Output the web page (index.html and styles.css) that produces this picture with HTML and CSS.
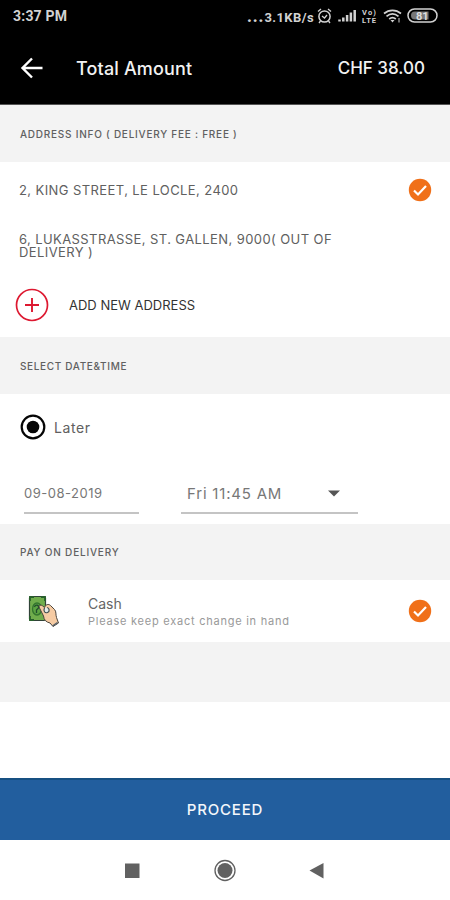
FILE: index.html
```html
<!DOCTYPE html>
<html lang="en">
<head>
<meta charset="utf-8">
<title>Total Amount</title>
<link rel="stylesheet" href="styles.css">
</head>
<body>
<header class="top">
  <div class="status">
    <span class="clock">3:37 PM</span>
    <span class="speed"><b class="dots">...</b>3.1KB/s</span>
    <svg class="status-icons" width="124" height="18" viewBox="0 0 124 18" fill="none" stroke="#d2d2d2">
      <circle cx="8.500" cy="9.500" r="5.600" stroke-width="1.500"/>
      <path d="M2 4.500 5 2M12 2l3 2.500M6 9l2.500 2L11 8M4.500 14 3 16M12.500 14l1.500 2" stroke-width="1.300"/>
      <path d="M23.500 12.500v2M27.300 10.500v4M31.100 8v6.500M34.900 5.500v9M38.700 3v11.500" stroke-width="2.500"/>
      <g fill="#d2d2d2" stroke="none" font-family="Roboto, sans-serif" font-weight="700" font-size="7.500"><text x="46" y="8" textLength="14">Vo)</text><text x="46" y="15.500" textLength="14">LTE</text></g>
      <path d="M68 6.500c5-4.200 12-4.200 17 0M70.500 9.300c3.700-3 8.300-3 12 0M73.200 12c2-1.600 4.600-1.600 6.600 0" stroke-width="1.700"/>
      <path d="m74.500 13 2 2.500 2-2.500z" fill="#d2d2d2" stroke="none"/>
      <path d="M83 11v4.500" stroke-width="1"/>
      <rect x="92" y="2" width="29" height="13" rx="6.500" stroke-width="1.500"/>
      <path d="M99 4.500h13.500v8H99a4 4 0 0 1 0-8z" fill="#777" stroke="none"/>
      <text x="100" y="12.500" fill="#ddd" stroke="none" font-family="Roboto, sans-serif" font-size="11" font-weight="700">81</text>
    </svg>
  </div>
  <div class="bar">
    <svg class="back" width="24" height="24" viewBox="0 0 24 24" fill="none" stroke="#fff" stroke-width="2.400"><path d="M22.500 12H3M12 2.500 2.500 12l9.500 9.500"/></svg>
    <h1>Total Amount</h1>
    <span class="total">CHF 38.00</span>
  </div>
</header>
<main>
  <h2 class="section address-head">ADDRESS INFO ( DELIVERY FEE : FREE )</h2>
  <section class="addresses">
    <div class="address first">
      <span>2, KING STREET, LE LOCLE, 2400</span>
      <svg class="check" width="24" height="24" viewBox="0 0 24 24"><circle cx="12" cy="12" r="11.200" fill="#f07019"/><path d="m6 12.500 4 4 8-8.500" fill="none" stroke="#fff" stroke-width="2.200"/></svg>
    </div>
    <div class="address second">6, LUKASSTRASSE, ST. GALLEN, 9000( OUT OF DELIVERY )</div>
    <div class="add">
      <svg width="34" height="34" viewBox="0 0 34 34" fill="none" stroke="#dd1830"><circle cx="17" cy="17" r="15.500" stroke-width="1.700"/><path d="M17 10v14M10 17h14" stroke-width="1.900"/></svg>
      <span>ADD NEW ADDRESS</span>
    </div>
  </section>
  <h2 class="section date-head">SELECT DATE&amp;TIME</h2>
  <section class="schedule">
    <div class="later">
      <svg width="26" height="26" viewBox="0 0 26 26"><circle cx="13" cy="13" r="11.300" fill="none" stroke="#050505" stroke-width="2.200"/><circle cx="13" cy="13" r="6.300" fill="#050505"/></svg>
      <span>Later</span>
    </div>
    <div class="fields">
      <div class="field date"><span>09-08-2019</span></div>
      <div class="field time"><span>Fri 11:45 AM</span><svg width="12" height="7" viewBox="0 0 12 7"><path d="M0 .5h12L6 6.500z" fill="#555"/></svg></div>
    </div>
  </section>
  <h2 class="section pay-head">PAY ON DELIVERY</h2>
  <section class="payment">
    <svg class="cash" width="34" height="34" viewBox="0 0 34 34">
      <rect x="3.500" y="2.500" width="16" height="24" rx="1.500" fill="#70ad4c" stroke="#304238" stroke-width="1.200"/>
      <path d="M4 7V3h4M15 3h4v4M4 22v4h4" fill="none" stroke="#28602c" stroke-width="1.800"/>
      <ellipse cx="11" cy="15" rx="4.500" ry="6" fill="#5da443" stroke="#34752f" stroke-width="1.300"/>
      <path d="M8.500 13c1-3 5-2 4 1l-2 2v3" fill="none" stroke="#214e2d" stroke-width="1.300"/>
      <path d="M13.500 14c-1.500-2 1-3.800 3-2.200l2 1.700c1-3 4-4 6-2l4 4c2 2 1 5 2 8l2 5.500-5.500 3.500-3-3.500c-4-1-6-3-6.500-7z" fill="#f6cba3" stroke="#4b443c" stroke-width="1"/>
      <path d="M18.500 14c-1.500 3 .5 5.500 3 4.500s2-4.500-.5-5" fill="#e6ece8" stroke="#3e4c50" stroke-width="1.200"/>
      <path d="m26.500 32 5-3.500" stroke="#56616a" stroke-width="1.500"/>
    </svg>
    <div class="method"><span class="cash-name">Cash</span><span class="hint">Please keep exact change in hand</span></div>
    <svg class="check" width="24" height="24" viewBox="0 0 24 24"><circle cx="12" cy="12" r="11.200" fill="#f07019"/><path d="m6 12.500 4 4 8-8.500" fill="none" stroke="#fff" stroke-width="2.200"/></svg>
  </section>
  <div class="section spacer"></div>
</main>
<button class="proceed">PROCEED</button>
<nav class="system">
  <svg width="450" height="60" viewBox="0 0 450 60" fill="#616161"><path d="M125 23.500h14.500V38H125z"/><circle cx="225" cy="30.500" r="7.500"/><circle cx="225" cy="30.500" r="10" fill="none" stroke="#616161" stroke-width="1.300"/><path d="M309.500 30.500 323.500 23v15.500z"/></svg>
</nav>
</body>
</html>
```
FILE: styles.css
```css
* { box-sizing: border-box; }
body {
  margin: 0;
  width: 450px;
  height: 900px;
  display: flex;
  flex-direction: column;
  overflow: hidden;
  background: #fff;
  color: #606060;
  font-family: Inter, sans-serif;
}
h1, h2 { margin: 0; }
span { white-space: nowrap; }
svg { display: block; flex: none; }
.top { height: 105px; flex: none; background: #000; color: #f2f2f2; border-bottom: 1px solid #555; }
.status { height: 32px; display: flex; align-items: center; padding: 0 10px 0 13px; }
.clock { font: 700 14px Roboto, sans-serif; letter-spacing: 0.2px; color: #d2d2d2; }
.speed { margin-left: auto; font: 700 13px Roboto, sans-serif; letter-spacing: 0.4px; color: #d2d2d2; }
.dots { font-size: 16px; letter-spacing: 1px; }
.status-icons { margin-left: 2px; }
.bar { height: 72px; display: flex; align-items: center; padding: 0 25px 0 20px; }
.bar h1 { margin-left: 32px; font-size: 18px; font-weight: 500; letter-spacing: 0.15px; }
.total { margin-left: auto; font-size: 17px; font-weight: 500; }
.section {
  flex: none;
  display: flex;
  align-items: center;
  padding-left: 20px;
  background: #f3f3f3;
  font-size: 10px;
  font-weight: 500;
}
.address-head { height: 57px; letter-spacing: 0.76px; }
.addresses { height: 175px; }
.address { padding-left: 19px; font-size: 13px; line-height: 13px; letter-spacing: 0.41px; }
.first { height: 56px; display: flex; align-items: center; justify-content: space-between; padding-right: 18px; }
.second { height: 70px; padding-top: 15px; padding-right: 90px; }
.add { height: 34px; display: flex; align-items: center; padding-left: 15px; gap: 20px; font-size: 13px; color: #333; }
.date-head { height: 57px; letter-spacing: 0.65px; }
.schedule { height: 130px; padding-top: 20px; }
.later { height: 26px; display: flex; align-items: center; gap: 8px; padding-left: 20px; font-size: 14px; letter-spacing: 0.6px; }
.fields { display: flex; gap: 42px; padding: 35px 0 0 24px; color: #777; }
.field { height: 39px; display: flex; align-items: center; border-bottom: 2px solid #c4c4c4; }
.date { width: 115px; padding-bottom: 1px; font-size: 13px; letter-spacing: 0.5px; }
.time { width: 177px; padding: 0 18px 1px 6px; justify-content: space-between; font-size: 15px; letter-spacing: 0.8px; }
.pay-head { height: 56px; letter-spacing: 0.8px; }
.payment { height: 62px; display: flex; align-items: center; padding: 0 18px 0 26px; }
.method { display: flex; flex-direction: column; gap: 3px; margin: 2px auto 0 28px; }
.cash-name { font-size: 14px; line-height: 15px; color: #666; }
.hint { font-size: 11px; line-height: 14px; letter-spacing: 0.76px; color: #999; }
.spacer { height: 60px; }
.proceed {
  flex: none;
  height: 62px;
  margin: auto 0 0;
  border: 0;
  border-top: 2px solid #175082;
  border-radius: 0;
  padding: 0 0 2px;
  background: #225e9e;
  color: #f3f6fb;
  font: 500 15px Inter, sans-serif;
  letter-spacing: 0.8px;
}
.system { flex: none; height: 60px; }
```
